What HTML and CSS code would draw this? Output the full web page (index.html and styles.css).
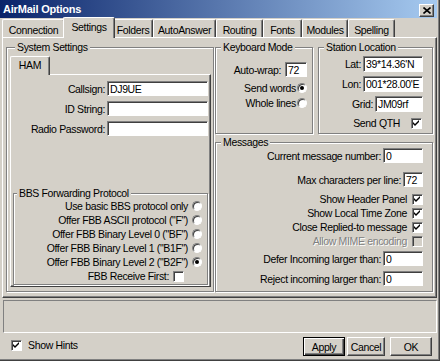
FILE: index.html
```html
<!DOCTYPE html>
<html lang="en">
<head>
  <meta charset="UTF-8">
  <title>AirMail Options</title>
  <link rel="stylesheet" href="styles.css">
</head>
<body>

<div class="window">
  <div class="titlebar">
    <span>AirMail Options</span>
    <span class="close">
      <svg width="8" height="7" viewBox="0 0 8 7"><path d="M0.5 0.5 L7.5 6.5 M7.5 0.5 L0.5 6.5" stroke="#000" stroke-width="1.6"/></svg>
    </span>
  </div>

  <div class="tabs">
    <div class="tab" style="width: 63px">Connection</div>
    <div class="tab active" style="width: 52px">Settings</div>
    <div class="tab" style="width: 40px">Folders</div>
    <div class="tab" style="width: 63px">AutoAnswer</div>
    <div class="tab" style="width: 47px">Routing</div>
    <div class="tab" style="width: 39px">Fonts</div>
    <div class="tab" style="width: 46px">Modules</div>
    <div class="tab" style="width: 47px">Spelling</div>
  </div>

  <div class="page">
    <fieldset class="group system">
      <legend>System Settings</legend>
      <div class="subtabs">
        <div class="tab active" style="width: 40px">HAM</div>
      </div>
      <div class="subpage">
        <div class="row field"><label>Callsign:</label><input class="input" style="width: 101px" value="DJ9UE"></div>
        <div class="row field"><label>ID String:</label><input class="input" style="width: 101px" value=""></div>
        <div class="row field"><label>Radio Password:</label><input class="input" style="width: 101px" value=""></div>

        <fieldset class="group bbs">
          <legend>BBS Forwarding Protocol</legend>
          <div class="row opt">Use basic BBS protocol only <span class="radio"></span></div>
          <div class="row opt">Offer FBB ASCII protocol ("F") <span class="radio"></span></div>
          <div class="row opt">Offer FBB Binary Level 0 ("BF") <span class="radio"></span></div>
          <div class="row opt">Offer FBB Binary Level 1 ("B1F") <span class="radio"></span></div>
          <div class="row opt">Offer FBB Binary Level 2 ("B2F") <span class="radio"><span class="dot"></span></span></div>
          <div class="row opt receive">FBB Receive First: <span class="check"></span></div>
        </fieldset>
      </div>
    </fieldset>

    <div class="right">
      <div class="toprow">
        <fieldset class="group keyboard">
          <legend>Keyboard Mode</legend>
          <div class="row wrap"><label>Auto-wrap:</label><input class="input" style="width: 22px" value="72"></div>
          <div class="row opt tight">Send words <span class="radio"><span class="dot"></span></span></div>
          <div class="row opt tight">Whole lines <span class="radio"></span></div>
        </fieldset>

        <fieldset class="group station">
          <legend>Station Location</legend>
          <div class="row loc"><label>Lat:</label><input class="input tall" style="width: 60px" value="39*14.36'N"></div>
          <div class="row loc"><label>Lon:</label><input class="input tall" style="width: 60px" value="001*28.00'E"></div>
          <div class="row loc"><label>Grid:</label><input class="input tall" style="width: 48px" value="JM09rf"></div>
          <div class="row opt qth">Send QTH <span class="check"><svg viewBox="0 0 7 7" width="7" height="7"><path d="M0 2 L2 4 L6 0 L6 2 L2 6 L0 4 Z"/></svg></span></div>
        </fieldset>
      </div>

      <fieldset class="group messages">
        <legend>Messages</legend>
        <div class="row field"><label>Current message number:</label><input class="input" style="width: 40px" value="0"></div>
        <div class="row field second"><label>Max characters per line:</label><input class="input" style="width: 20px" value="72"></div>
        <div class="checks">
          <div class="row opt">Show Header Panel <span class="check"><svg viewBox="0 0 7 7" width="7" height="7"><path d="M0 2 L2 4 L6 0 L6 2 L2 6 L0 4 Z"/></svg></span></div>
          <div class="row opt">Show Local Time Zone <span class="check"><svg viewBox="0 0 7 7" width="7" height="7"><path d="M0 2 L2 4 L6 0 L6 2 L2 6 L0 4 Z"/></svg></span></div>
          <div class="row opt">Close Replied-to message <span class="check"><svg viewBox="0 0 7 7" width="7" height="7"><path d="M0 2 L2 4 L6 0 L6 2 L2 6 L0 4 Z"/></svg></span></div>
          <div class="row opt disabled">Allow MIME encoding <span class="check off"></span></div>
        </div>
        <div class="row field defer"><label>Defer Incoming larger than:</label><input class="input" style="width: 40px" value="0"></div>
        <div class="row field"><label>Reject incoming larger than:</label><input class="input" style="width: 40px" value="0"></div>
      </fieldset>
    </div>
  </div>

  <div class="hints"></div>

  <div class="bottombar">
    <div class="show-hints">
      <span class="check"><svg viewBox="0 0 7 7" width="7" height="7"><path d="M0 2 L2 4 L6 0 L6 2 L2 6 L0 4 Z"/></svg></span>
      Show Hints
    </div>
    <div class="buttons">
      <button class="btn default" style="width: 42px">Apply</button>
      <button class="btn" style="width: 38px">Cancel</button>
      <button class="btn ok" style="width: 42px">OK</button>
    </div>
  </div>
</div>

</body>
</html>
```

FILE: styles.css
```css
* {
  box-sizing: border-box;
}

body {
  margin: 0;
  background: #d4d0c8;
  font-family: "Liberation Sans", Arial, sans-serif;
  font-size: 10.5px;
  letter-spacing: -0.35px;
  color: #000;
}

.window {
  width: 440px;
  height: 361px;
  background: #d4d0c8;
  border-right: 1px solid #404040;
  border-bottom: 1px solid #404040;
  box-shadow: inset -1px -1px #808080;
  padding: 0 2px 1px 0;
  display: flex;
  flex-direction: column;
}

/* title bar */

.titlebar {
  height: 18px;
  flex: none;
  display: flex;
  align-items: center;
  justify-content: space-between;
  padding: 0 3px 0 3px;
  background: linear-gradient(to right, #0a246a, #a6caf0);
  color: #fff;
  font-weight: bold;
  font-size: 11px;
  letter-spacing: -0.2px;
}

.close {
  width: 15px;
  height: 13px;
  margin-top: 2px;
  background: #d4d0c8;
  border: 1px solid;
  border-color: #fff #404040 #404040 #fff;
  box-shadow: inset -1px -1px #808080;
  display: flex;
  align-items: center;
  justify-content: center;
}

/* tabs */

.tabs {
  height: 19px;
  flex: none;
  display: flex;
  align-items: flex-end;
  padding-left: 2px;
}

.tab {
  height: 18px;
  flex: none;
  display: flex;
  align-items: center;
  justify-content: center;
  padding-top: 2px;
  background: #d4d0c8;
  border-top: 1px solid #fff;
  border-left: 1px solid #fff;
  border-right: 1px solid #404040;
  box-shadow: inset -1px 0 #808080;
  border-radius: 2px 2px 0 0;
}

.tab.active {
  height: 21px;
  margin: 0 -2px -1px;
  padding-top: 0;
  padding-bottom: 2px;
  position: relative;
  z-index: 1;
}

.page {
  height: 261px;
  flex: none;
  margin-left: 2px;
  border: 1px solid;
  border-color: #fff #404040 #404040 #fff;
  box-shadow: inset -1px -1px #808080;
  padding: 3px 3px 0 3px;
  display: flex;
  gap: 1px;
}

/* group boxes */

.group {
  margin: 0;
  padding: 0;
  min-width: 0;
  border: 1px solid #808080;
  box-shadow: inset 1px 1px #fff, 1px 1px #fff;
}

.group legend {
  padding: 0 2px;
  margin-left: 5px;
  line-height: 12px;
  background: #d4d0c8;
}

.system {
  width: 208px;
  height: 251px;
  padding: 0 2px 0 3px;
}

.subtabs {
  height: 21px;
  padding-top: 3px;
  display: flex;
  align-items: flex-end;
}

.subtabs .tab.active {
  height: 19px;
  margin: 0 0 -1px;
}

.subpage {
  width: 201px;
  height: 213px;
  border: 1px solid;
  border-color: #fff #404040 #404040 #fff;
  box-shadow: inset -1px -1px #808080;
  padding: 6px 2px 0 0;
  display: flex;
  flex-direction: column;
  gap: 5px;
}

.right {
  width: 218px;
  display: flex;
  flex-direction: column;
  gap: 2px;
}

.toprow {
  display: flex;
  gap: 5px;
}

.keyboard {
  width: 98px;
  height: 93px;
  padding: 9px 5px 0 0;
}

.station {
  width: 115px;
  height: 93px;
  padding: 3px 9px 0 0;
}

.messages {
  height: 156px;
  padding: 0 9px 0 0;
}

/* rows */

.row {
  display: flex;
  align-items: center;
  justify-content: flex-end;
  white-space: nowrap;
}

.field {
  gap: 2px;
}

.input {
  height: 15px;
  margin: 0;
  padding: 0 2px;
  border: 1px solid;
  border-color: #808080 #fff #fff #808080;
  box-shadow: inset 1px 1px #404040;
  background: #fff;
  font: inherit;
  letter-spacing: inherit;
  color: #000;
  outline: none;
}

.input.tall {
  height: 16px;
}

.bbs {
  margin: auto 0 1px 2px;
  height: 98px;
  padding: 0 5px 0 0;
}

.bbs legend {
  margin-left: 3px;
}

.opt {
  height: 14px;
  gap: 4px;
}

.opt.receive .check {
  margin-right: 18px;
}

.wrap {
  gap: 4px;
  margin-bottom: 3px;
}

.opt.tight {
  height: 15px;
  gap: 1px;
}

.loc {
  gap: 2px;
  margin-bottom: 4px;
}

.opt.qth {
  gap: 11px;
  padding-right: 1px;
}

.second {
  margin-top: 9px;
}

.checks {
  margin-top: 5px;
}

.checks .opt {
  gap: 5px;
}

.defer {
  margin-top: 3px;
  margin-bottom: 5px;
}

.disabled {
  color: #808080;
  text-shadow: 1px 1px #fff;
}

/* radio and check boxes */

.radio {
  width: 10px;
  height: 10px;
  flex: none;
  border-radius: 50%;
  background: #fff;
  border: 1px solid;
  border-color: #808080 #fff #fff #808080;
  box-shadow: inset 1px 1px #404040;
  display: flex;
  align-items: center;
  justify-content: center;
}

.radio .dot {
  width: 4px;
  height: 4px;
  border-radius: 50%;
  background: #000;
}

.check {
  width: 11px;
  height: 11px;
  flex: none;
  background: #fff;
  border: 1px solid;
  border-color: #808080 #fff #fff #808080;
  box-shadow: inset 1px 1px #404040;
  display: flex;
  align-items: center;
  justify-content: center;
}

.check.off {
  background: #d4d0c8;
}

/* bottom */

.hints {
  height: 33px;
  flex: none;
  margin: 2px 0 0 3px;
  border: 1px solid;
  border-color: #808080 #fff #fff #808080;
}

.bottombar {
  height: 26px;
  flex: none;
  display: flex;
  justify-content: space-between;
  align-items: flex-start;
  padding: 4px 5px 0 11px;
}

.show-hints {
  display: flex;
  align-items: center;
  gap: 6px;
  margin-top: 2px;
}

.buttons {
  display: flex;
  gap: 2px;
}

.btn {
  height: 19px;
  margin: 0;
  padding: 0;
  background: #d4d0c8;
  border: 1px solid;
  border-color: #fff #404040 #404040 #fff;
  box-shadow: inset -1px -1px #808080;
  font: inherit;
  letter-spacing: inherit;
  color: #000;
}

.btn.default {
  border: 1px solid #000;
  box-shadow: inset 1px 1px #fff, inset -1px -1px #404040, inset -2px -2px #808080;
}

.btn.ok {
  margin-left: 3px;
}
```
